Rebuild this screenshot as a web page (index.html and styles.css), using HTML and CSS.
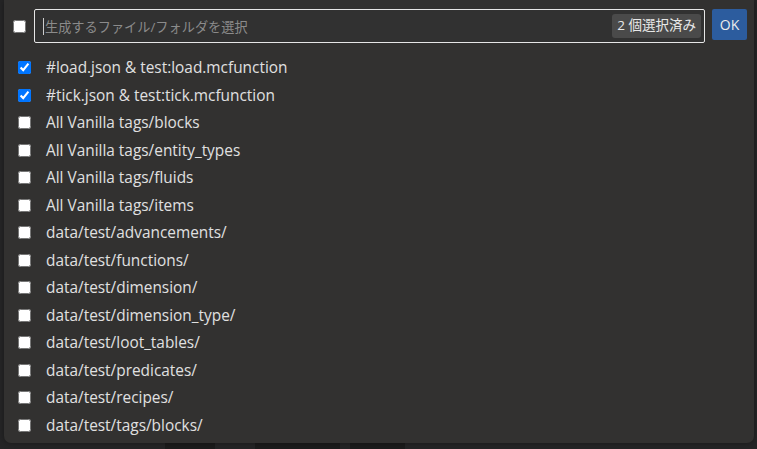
FILE: index.html
```html
<!DOCTYPE html>
<html lang="ja">
<head>
<meta charset="utf-8">
<link rel="stylesheet" href="styles.css">
</head>
<body>
<div class="panel">
  <div class="header">
    <input type="checkbox" class="cb-all">
    <div class="inputbox">
      <span class="caret"></span>
      <span class="placeholder">生成するファイル/フォルダを選択</span>
      <span class="badge">2 個選択済み</span>
    </div>
    <button class="ok">OK</button>
  </div>
  <ul class="list">
    <li><input type="checkbox" checked><span>#load.json &amp; test:load.mcfunction</span></li>
    <li><input type="checkbox" checked><span>#tick.json &amp; test:tick.mcfunction</span></li>
    <li><input type="checkbox"><span>All Vanilla tags/blocks</span></li>
    <li><input type="checkbox"><span>All Vanilla tags/entity_types</span></li>
    <li><input type="checkbox"><span>All Vanilla tags/fluids</span></li>
    <li><input type="checkbox"><span>All Vanilla tags/items</span></li>
    <li><input type="checkbox"><span>data/test/advancements/</span></li>
    <li><input type="checkbox"><span>data/test/functions/</span></li>
    <li><input type="checkbox"><span>data/test/dimension/</span></li>
    <li><input type="checkbox"><span>data/test/dimension_type/</span></li>
    <li><input type="checkbox"><span>data/test/loot_tables/</span></li>
    <li><input type="checkbox"><span>data/test/predicates/</span></li>
    <li><input type="checkbox"><span>data/test/recipes/</span></li>
    <li><input type="checkbox"><span>data/test/tags/blocks/</span></li>
  </ul>
</div>
<div class="under">
  <div class="blk b1"></div>
  <div class="blk b2"></div>
  <div class="blk b3"></div>
</div>
</body>
</html>
```

FILE: styles.css
```css
html, body {
  margin: 0;
  padding: 0;
  background: #252526;
  overflow: hidden;
}
body {
  width: 757px;
  height: 449px;
  font-family: "Open Sans", "Noto Sans CJK JP", sans-serif;
  color: #cccccc;
}
.panel {
  margin: 0 3px 0 4px;
  height: 443px;
  background: #323130;
  border-radius: 0 0 7px 7px;
  box-sizing: border-box;
  display: flex;
  flex-direction: column;
  box-shadow: 0 0 6px rgba(0,0,0,0.35);
  position: relative;
  z-index: 1;
}
.header {
  display: flex;
  align-items: center;
  padding: 9px 7px 0 6px;
  height: 34px;
}
.cb-all {
  margin: 0 8px 0 3px;
  width: 13px;
  height: 13px;
}
.inputbox {
  flex: 1;
  height: 34px;
  box-sizing: border-box;
  border: 1px solid #e6e6e6;
  border-radius: 2px;
  background: #313131;
  display: flex;
  align-items: center;
  padding: 0 3px 0 8px;
}
.caret {
  width: 1px;
  height: 17px;
  background: #cccccc;
  margin-right: 1px;
}
.placeholder {
  flex: 1;
  color: #8b8b8b;
  font-size: 13.2px;
}
.badge {
  background: #4a4a4a;
  color: #e8e8e8;
  font-size: 13.5px;
  padding: 2px 5px 3px 5px;
  border-radius: 3px;
  line-height: 19px;
}
.ok {
  margin-left: 7px;
  width: 35px;
  height: 31px;
  align-self: flex-start;
  background: #2c5c9e;
  color: #ececec;
  border: none;
  border-radius: 2px;
  font-family: "Open Sans", sans-serif;
  font-size: 14px;
  padding: 0;
}
.list {
  list-style: none;
  margin: 0;
  padding: 11px 0 0 0;
}
.list li {
  height: 27.5px;
  display: flex;
  align-items: center;
  padding-left: 11px;
  font-size: 15.4px;
  color: #e0e0e0;
}
.list li input {
  margin: 0 15px 0 3px;
  width: 13px;
  height: 13px;
}
.under {
  display: flex;
  height: 6px;
}
.blk {
  background: #1c1c1c;
  height: 6px;
}
.b1 { margin-left: 165px; width: 50px; }
.b2 { margin-left: 40px; width: 85px; }
.b3 { margin-left: 10px; width: 55px; }
```
